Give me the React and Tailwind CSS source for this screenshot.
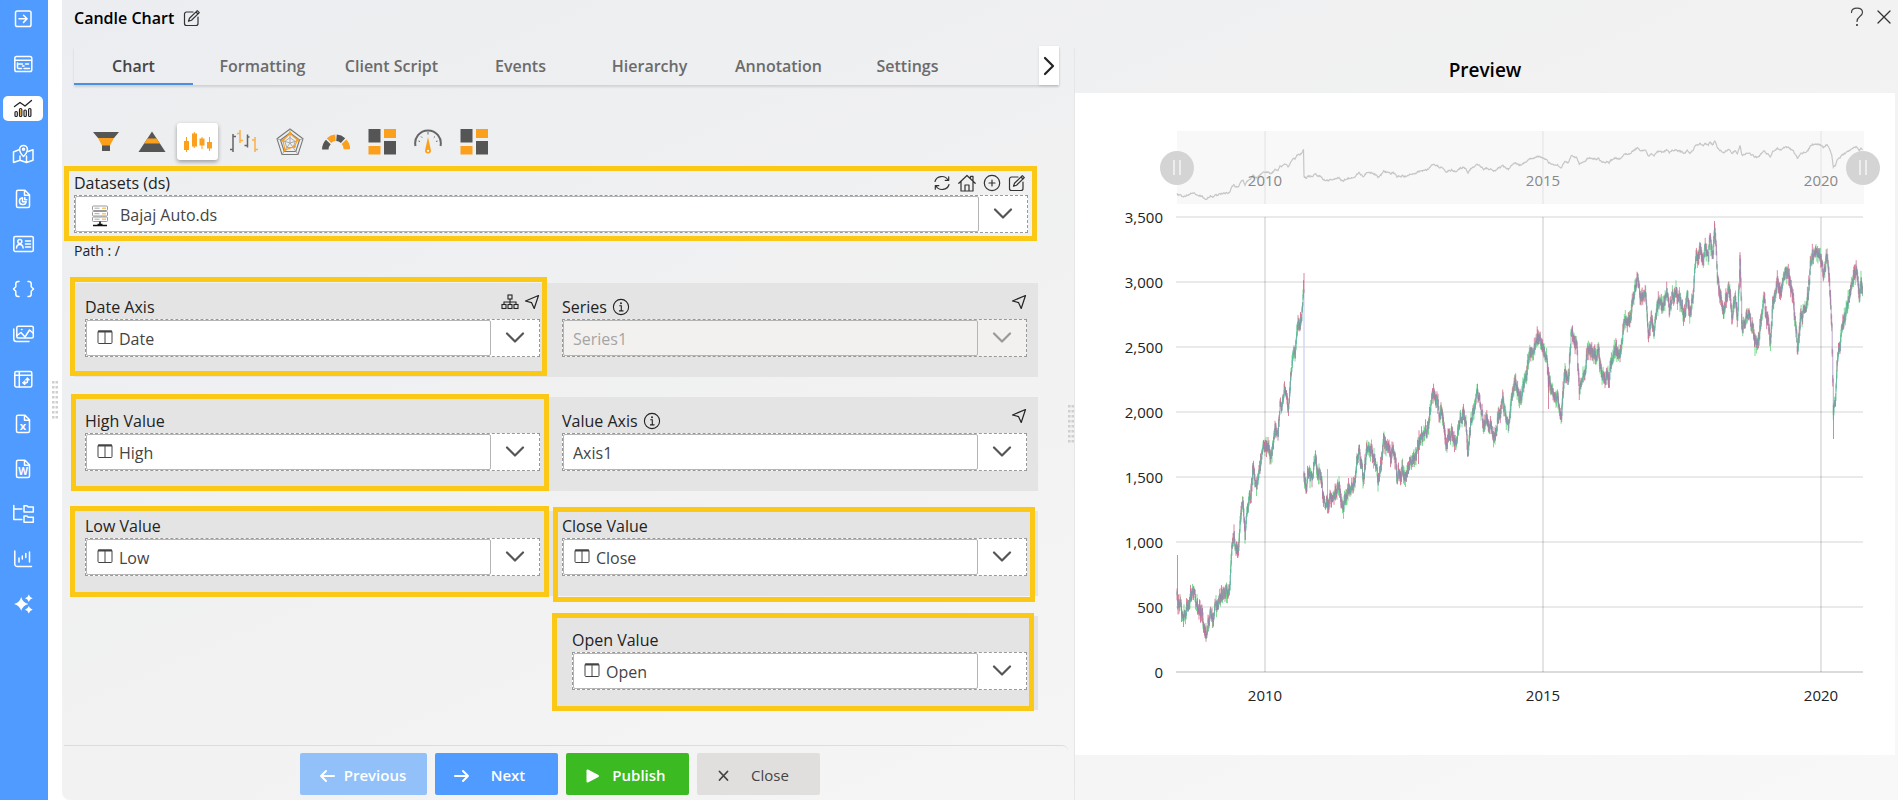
import React, { useRef } from "react";

const FONT = "font-['Open_Sans','Noto_Sans',sans-serif]";

/* ---------- sidebar ---------- */

function NavIcon({ children }) {
  return (
    <svg
      width="24"
      height="20"
      viewBox="0 0 24 20"
      fill="none"
      stroke="currentColor"
      strokeWidth="1.5"
      strokeLinecap="round"
      strokeLinejoin="round"
      aria-hidden="true"
    >
      {children}
    </svg>
  );
}

const filePath =
  "M7 1.2h7l4.500 4.500v11.300a1.500 1.500 0 0 1-1.500 1.500H7A1.500 1.500 0 0 1 5.500 17V2.700A1.500 1.500 0 0 1 7 1.200zM13.500 1.500V6.200h4.700";

const navItems = [
  {
    label: "Open",
    icon: (
      <NavIcon>
        <rect x="4.500" y="2" width="15.500" height="15.500" rx="1.800" />
        <path d="M8 9.800h8M12.500 6.200l3.600 3.600-3.600 3.600" />
      </NavIcon>
    ),
  },
  {
    label: "Dashboard",
    icon: (
      <NavIcon>
        <rect x="3.800" y="2.500" width="17" height="15" rx="1.800" />
        <path d="M4 6.300h16.500M6.500 9v4.500a1 1 0 0 0 1 1h3M7 10h4.500M14.500 10h3M13 14.500h5.500M11.500 12h1.500" />
      </NavIcon>
    ),
  },
  {
    label: "Charts",
    active: true,
    icon: (
      <NavIcon>
        <path strokeWidth="1.300" d="M3.500 7.500l5.500-4 5 3.500 6.500-5.500" />
        <rect strokeWidth="1.200" x="4" y="12.500" width="2.300" height="5" rx="1" />
        <rect strokeWidth="1.200" x="8.500" y="9.500" width="2.300" height="8" rx="1" />
        <rect strokeWidth="1.200" x="13" y="11" width="2.300" height="6.500" rx="1" />
        <rect strokeWidth="1.200" x="17.600" y="9.500" width="2.300" height="8" rx="1" />
        <path stroke="#e0962c" strokeWidth="1" d="M9.700 11v5" />
      </NavIcon>
    ),
  },
  {
    label: "Maps",
    icon: (
      <NavIcon>
        <path d="M8.500 5.500L2.500 8v10.500l6.500-2.300 6.500 2.300 6.500-2.300V5.800L17 7.500M9 12v4M15.500 12v6" />
        <path d="M12.500 12.500C9.800 9.800 8.600 7.600 8.600 5.300a3.900 3.900 0 0 1 7.800 0c0 2.300-1.200 4.500-3.900 7.200z" />
        <circle cx="12.500" cy="5.300" r="1" />
      </NavIcon>
    ),
  },
  {
    label: "Reports",
    icon: (
      <NavIcon>
        <path d={filePath} />
        <path d="M11.500 8.800a3.400 3.400 0 1 0 3.700 3.900h-3.700zM13.800 8.500v2.200h2" />
      </NavIcon>
    ),
  },
  {
    label: "Cards",
    icon: (
      <NavIcon>
        <rect x="2.800" y="2.500" width="19.500" height="15" rx="1.500" />
        <circle cx="8.800" cy="7.500" r="2" />
        <path d="M5.500 14c.2-2.300 1.400-3.500 3.300-3.500s3.100 1.200 3.300 3.500M14.500 7h5M14.500 10h5M14.500 13h5" />
      </NavIcon>
    ),
  },
  {
    label: "Code",
    icon: (
      <NavIcon>
        <path d="M8 2.500H7A2.200 2.200 0 0 0 4.800 4.700v3L2.500 10l2.300 2.300v3A2.200 2.200 0 0 0 7 17.500h1M17 2.500h1a2.200 2.200 0 0 1 2.200 2.200v3l2.300 2.300-2.300 2.300v3a2.200 2.200 0 0 1-2.200 2.200h-1" />
      </NavIcon>
    ),
  },
  {
    label: "Images",
    icon: (
      <NavIcon>
        <rect x="5.800" y="2.200" width="16.500" height="11.800" rx="1.500" />
        <path d="M2.800 5v10A2.500 2.500 0 0 0 5.300 17.500H18M6 11.500l4-3 4 4.500 4.500-7 3.500 3M10.500 5.500h.5" />
      </NavIcon>
    ),
  },
  {
    label: "Pivot",
    icon: (
      <NavIcon>
        <rect x="3.800" y="2.500" width="17" height="15.500" rx="1.500" />
        <path d="M4 6.300h16.500M8.300 2.800v15M13 14h1.500a2 2 0 0 0 2-2V10.500" />
        <path fill="currentColor" strokeWidth=".8" d="M14 12v4l-2.500-2zM14.700 11h3.800l-1.900-2.300z" />
      </NavIcon>
    ),
  },
  {
    label: "Excel",
    icon: (
      <NavIcon>
        <path d={filePath} />
        <text x="12" y="16" textAnchor="middle" fontSize="11" fontWeight="700" fill="currentColor" stroke="none">x</text>
      </NavIcon>
    ),
  },
  {
    label: "Word",
    icon: (
      <NavIcon>
        <path d={filePath} />
        <text x="12" y="16" textAnchor="middle" fontSize="10" fontWeight="700" fill="currentColor" stroke="none">W</text>
      </NavIcon>
    ),
  },
  {
    label: "Tree",
    icon: (
      <NavIcon>
        <path d="M2.800 1.500v14h8M2.800 5h8" />
        <path d="M13 1.800h3l1.200 1.200H22.300V8H13zM13 12h3l1.200 1.200h5.100v5H13z" />
      </NavIcon>
    ),
  },
  {
    label: "Statistics",
    icon: (
      <NavIcon>
        <path d="M3.800 2v13A2.500 2.500 0 0 0 6.300 17.500H20.500M8 9v4M11.300 7v3M14.800 4.500v4M18.500 3v10" />
      </NavIcon>
    ),
  },
  {
    label: "Smart",
    icon: (
      <NavIcon>
        <g fill="currentColor" stroke="none">
          <path d="M10.200 3q1.500 5.500 7.200 7-5.700 1.500-7.200 7-1.500-5.500-7.200-7 5.700-1.500 7.200-7z" />
          <path d="M17.800 .5q.9 3 3.900 3.700-3 .7-3.900 3.700-.9-3-3.900-3.700 3-.7 3.900-3.700zM17.800 12q.9 3 3.900 3.700-3 .7-3.900 3.700-.9-3-3.900-3.700 3-.7 3.900-3.700z" />
        </g>
      </NavIcon>
    ),
  },
];

function Sidebar() {
  return (
    <nav aria-label="Widgets" className="flex w-[48px] shrink-0 flex-col gap-[20px] bg-[#4f9bff] pl-[3px] pt-[6px]">
      {navItems.map((item) => (
        <button
          key={item.label}
          type="button"
          aria-label={item.label}
          className={
            item.active
              ? "flex h-[25px] w-[40px] items-center justify-center rounded-[5px] bg-white text-[#222]"
              : "flex h-[25px] w-[40px] items-center justify-center text-white"
          }
        >
          {item.icon}
        </button>
      ))}
    </nav>
  );
}

/* ---------- small icons ---------- */

function EditIcon() {
  return (
    <svg width="18" height="18" viewBox="0 0 18 18" fill="none" stroke="#333" strokeWidth="1.200" strokeLinecap="round" strokeLinejoin="round" aria-hidden="true">
      <path d="M10 3H3.500A2 2 0 0 0 1.500 5v9.500a2 2 0 0 0 2 2H13a2 2 0 0 0 2-2V8" />
      <path d="M14.300 1.600l2 2L8.500 11.300l-3 1 1-3zM13 3l2 2" />
    </svg>
  );
}

function RefreshIcon() {
  return (
    <svg width="18" height="18" viewBox="0 0 18 18" fill="none" stroke="#333" strokeWidth="1.200" strokeLinecap="round" strokeLinejoin="round" aria-hidden="true">
      <path d="M2 7.500a7 6.500 0 0 1 13-1.500M16 10.500a7 6.500 0 0 1-13 1.500M15.700 2.800V6.300h-3.500M2.300 15.200V11.700h3.500" />
    </svg>
  );
}

function HomeIcon() {
  return (
    <svg width="18" height="18" viewBox="0 0 18 18" fill="none" stroke="#333" strokeWidth="1.200" strokeLinecap="round" strokeLinejoin="round" aria-hidden="true">
      <path d="M.8 9.300L9 1.500l8.200 7.800M3 7.500V17h12V7.500M7 17v-6h4v6M12.500 4.500V2.300H15v4.500" />
    </svg>
  );
}

function PlusCircleIcon() {
  return (
    <svg width="18" height="18" viewBox="0 0 18 18" fill="none" stroke="#333" strokeWidth="1.200" strokeLinecap="round" aria-hidden="true">
      <circle cx="9" cy="9" r="7.700" />
      <path d="M9 6v6M6 9h6" />
    </svg>
  );
}

function InfoIcon() {
  return (
    <svg width="18" height="18" viewBox="0 0 18 18" fill="none" stroke="#222" strokeWidth="1.100" aria-hidden="true">
      <circle cx="9" cy="9" r="7.600" />
      <path d="M7.300 7.800H9.300v5M7 12.900h4.500" />
      <circle cx="9" cy="5.200" r=".4" fill="#222" />
    </svg>
  );
}

function SendIcon() {
  return (
    <svg width="16" height="16" viewBox="0 0 16 16" fill="none" stroke="#222" strokeWidth="1.200" strokeLinejoin="round" aria-hidden="true">
      <path d="M14.500 1.500L1.500 7l6 1.600 2.700 5.900z" />
    </svg>
  );
}

function HierarchyIcon() {
  return (
    <svg width="18" height="16" viewBox="0 0 18 16" fill="none" stroke="#222" strokeWidth="1.100" aria-hidden="true">
      <rect x="7" y="1" width="4" height="4" />
      <rect x="1" y="10.500" width="4" height="4" />
      <rect x="7" y="10.500" width="4" height="4" />
      <rect x="13" y="10.500" width="4" height="4" />
      <path d="M9 5v5.500M3 10.500V8h12v2.500" />
    </svg>
  );
}

function ColumnIcon() {
  return (
    <svg width="16" height="15" viewBox="0 0 16 15" fill="none" stroke="#444" strokeWidth="1" aria-hidden="true">
      <rect x="1" y="1" width="14" height="12.500" rx="1" />
      <path d="M1 1.500h14" strokeWidth="2" />
      <path d="M8 1.500v12" />
    </svg>
  );
}

function ServerIcon() {
  return (
    <svg width="16" height="22" viewBox="0 0 16 22" fill="#fff" stroke="#999" strokeWidth="1" aria-hidden="true">
      <rect x=".5" y="1" width="15" height="4.500" rx="1" />
      <rect x=".5" y="6.500" width="15" height="4.500" rx="1" />
      <rect x=".5" y="12" width="15" height="4.500" rx="1" />
      <path d="M2.500 3.200h5M2.500 8.700h5M2.500 14.200h5" stroke="#aaa" />
      <path d="M10 3.200h4M10 8.700h4M10 14.200h4" stroke="#f5c96c" strokeWidth="1.500" />
      <path d="M8 16.500v3M1 20.500h14M5.500 19.500h5" stroke="#111" strokeWidth="1.600" />
    </svg>
  );
}

function ChevronIcon() {
  return (
    <svg width="20" height="12" viewBox="0 0 20 12" fill="none" stroke="currentColor" strokeWidth="2.200" strokeLinecap="round" strokeLinejoin="round" aria-hidden="true">
      <path d="M2 1.500l8 8 8-8" />
    </svg>
  );
}

/* ---------- chart type icons ---------- */

const DARK = "#555";
const ORANGE = "#fba01c";

function TypeSvg({ children }) {
  return (
    <svg width="28" height="28" viewBox="0 0 28 28" fill="none" aria-hidden="true">
      {children}
    </svg>
  );
}

function TreemapIcon() {
  return (
    <TypeSvg>
      <path fill={DARK} d="M.5 1h12v13.500h-12zM16 13h12v13.500h-12z" />
      <path fill={ORANGE} d="M16 1h12v9H16zM.5 18h12v8.500h-12z" />
    </TypeSvg>
  );
}

const chartTypes = [
  {
    label: "Funnel",
    icon: (
      <TypeSvg>
        <path fill={DARK} d="M1 4h26l-5 6H6zM10 17h8v6h-8z" />
        <path fill={ORANGE} d="M6 10h16l-4 7.500h-8z" />
      </TypeSvg>
    ),
  },
  {
    label: "Pyramid",
    icon: (
      <TypeSvg>
        <path fill={DARK} d="M14 3.500L27.500 24H.5z" />
        <path fill={ORANGE} d="M9.500 10.500h9L22 15.500H6z" />
      </TypeSvg>
    ),
  },
  {
    label: "Candle",
    active: true,
    icon: (
      <TypeSvg>
        <path stroke={ORANGE} strokeWidth="1" d="M2.500 9v15M10.300 4v16M18 9v12M25.500 9v14" />
        <path fill={ORANGE} d="M0 13h5v9H0zM8 5.500h5v13H8zM15.500 10.500h5v7h-5zM23 14h5v6.500h-5z" />
      </TypeSvg>
    ),
  },
  {
    label: "OHLC",
    icon: (
      <TypeSvg>
        <path stroke="#666" strokeWidth="1.500" d="M3 6v18M3 8.500h3M0 21.500h3M17.500 6.500v13M14.500 17.500h3M17.500 9h2" />
        <path stroke="#fbb04a" strokeWidth="1.500" d="M10 2v13M7 5.500h3M10 12.500h3M25 9v15M22 12h3M25 21.500h3" />
      </TypeSvg>
    ),
  },
  {
    label: "Radar",
    icon: (
      <TypeSvg>
        <path stroke="#777" strokeWidth="1.100" d="M14 1l13 9.800-5 15.700H6L1 10.800zM14 5l9.500 7-3.700 11.500H8.200L4.500 12z" />
        <path stroke="#999" strokeWidth=".8" d="M14 9.500l5.200 4L17.200 19.500h-6.400l-2-6zM14 15V1M14 15l13-4.200M14 15l8 11.500M14 15L6 26.500M14 15L1 10.800" />
        <path stroke={ORANGE} strokeWidth="1.100" d="M14 5.500l7.500 6.500-3 6.500-9.500 3.500-2-9.500z" />
        <g fill={ORANGE}>
          <circle cx="14" cy="5.500" r="1.400" />
          <circle cx="21.500" cy="12" r="1.400" />
          <circle cx="18.500" cy="18.500" r="1.400" />
          <circle cx="9" cy="22" r="1.400" />
          <circle cx="7" cy="12.500" r="1.400" />
        </g>
      </TypeSvg>
    ),
  },
  {
    label: "Gauge",
    icon: (
      <TypeSvg>
        <path stroke={DARK} strokeWidth="6.500" d="M3.300 21.500a11 11 0 0 1 3-7.500M14.500 9.800a11 11 0 0 1 6.500 2.800" />
        <path stroke={ORANGE} strokeWidth="6.500" d="M7 12.600a11 11 0 0 1 6.500-2.800M22 13.800a11 11 0 0 1 3 7.500" />
      </TypeSvg>
    ),
  },
  { label: "Treemap", icon: <TreemapIcon /> },
  {
    label: "Speedometer",
    icon: (
      <TypeSvg>
        <path stroke="#666" strokeWidth="2" d="M1.500 18a12.800 12.800 0 1 1 25 0" />
        <path stroke="#666" strokeWidth="1" d="M4.500 13l1.500.5M7 8.500l1.200 1.200M14 4v2.500M21 8.500l-1.200 1.200M23.500 13l-1.500.5" />
        <path fill={ORANGE} d="M14 9l3 13.500a3 3 0 1 1-6 0z" />
        <circle cx="14" cy="22.800" r="1.100" fill="#fff" />
      </TypeSvg>
    ),
  },
  { label: "Heat map", icon: <TreemapIcon /> },
];

/* ---------- fields ---------- */

function Field({ id, value, disabled, icon }) {
  const ref = useRef(null);
  const pad = icon === "server" ? "pl-[44px]" : icon === "column" ? "pl-[32px]" : "pl-[9px]";
  return (
    <div className={`relative flex h-[38px] border border-dashed border-[#999] ${disabled ? "bg-[#f3f1ef] text-[#a5a5a5]" : "bg-white text-[#444]"}`}>
      <select
        id={id}
        ref={ref}
        disabled={disabled}
        className={`min-w-0 flex-1 appearance-none rounded-[2px] border border-[#b5b5b5] bg-transparent pt-[2px] text-[16px] opacity-100 ${pad}`}
      >
        <option>{value}</option>
      </select>
      {icon === "server" && (
        <span className="pointer-events-none absolute left-[17px] top-[9px]"><ServerIcon /></span>
      )}
      {icon === "column" && (
        <span className="pointer-events-none absolute left-[11px] top-[10px]"><ColumnIcon /></span>
      )}
      <button
        type="button"
        disabled={disabled}
        aria-label={`Show options for ${value}`}
        onClick={() => ref.current?.showPicker?.()}
        className={`flex w-[48px] items-center justify-center ${disabled ? "text-[#999]" : "text-[#555]"}`}
      >
        <ChevronIcon />
      </button>
    </div>
  );
}

function Mark({ className }) {
  return <span className={`pointer-events-none absolute border-[5px] border-[#fbc915] ${className}`} />;
}

function Cell({ id, label, value, icon, info, actions, disabled, className, mark }) {
  return (
    <div className={`relative pb-[20px] ${className}`}>
      <div className="relative flex h-[24px] items-center gap-[5px]">
        <label htmlFor={id} className="text-[16px] text-[#222]">{label}</label>
        {info && <InfoIcon />}
        {actions && <div className="absolute -top-[1px] right-0 flex items-center gap-[5px]">{actions}</div>}
      </div>
      <Field id={id} value={value} icon={icon} disabled={disabled} />
      {mark && <Mark className={mark} />}
    </div>
  );
}

function Grip() {
  return (
    <svg width="6" height="38" viewBox="0 0 6 38" aria-hidden="true">
      {[0, 5, 10, 15, 20, 25, 30, 35].map((y) => (
        <path key={y} d={`M0 ${y}h2.500v2.500H0zM3.500 ${y}H6v2.500H3.500z`} fill="#cfcfcf" />
      ))}
    </svg>
  );
}

/* ---------- preview chart ---------- */

const rise = [
  [102, 503], [104, 510], [107, 522], [110, 514], [114, 507], [118, 499], [121, 504], [123, 514], [125, 516], [128, 530], [131, 538], [133, 526],
  [138, 520], [142, 516], [145, 511], [149, 499], [152, 496], [155, 491], [157, 463], [159, 441], [161, 450], [163, 456], [166, 428], [168, 412],
  [170, 437], [173, 417], [176, 394], [178, 374], [181, 394], [184, 384], [188, 356], [192, 356], [196, 361], [200, 341], [203, 338], [205, 311],
  [208, 311], [211, 304], [213, 311], [215, 288], [218, 264], [220, 261], [223, 231], [225, 241], [227, 218], [229, 192],
];

const middle = [
  [229, 386], [231, 389], [233, 378], [237, 381], [240, 369], [243, 381], [246, 384], [248, 408], [251, 418], [255, 406], [258, 398], [264, 391],
  [266, 409], [272, 404], [275, 394], [280, 392], [284, 364], [288, 381], [293, 349], [297, 362], [300, 368], [303, 391], [306, 374], [309, 346],
  [313, 356], [316, 364], [319, 361], [322, 384], [327, 381], [332, 384], [335, 361], [340, 364], [343, 351], [347, 346], [350, 338], [353, 331],
  [357, 296], [360, 306], [363, 314], [368, 324], [372, 357], [376, 336], [382, 351], [385, 331], [389, 319], [393, 353], [397, 321], [401, 301],
];

/* Second half is kept on a three-times finer grid. */
const recentFine = [
  [0, 615], [8, 660], [25, 665], [45, 695], [55, 640], [68, 625], [85, 680], [97, 580], [107, 515], [117, 600], [130, 555], [145, 485],
  [160, 440], [173, 385], [185, 435], [198, 470], [205, 510], [215, 580], [228, 625], [237, 605], [245, 645], [255, 540], [265, 530],
  [273, 420], [290, 420], [298, 560], [312, 530], [325, 430], [340, 475], [355, 445], [365, 525], [375, 510], [387, 540], [403, 430],
  [420, 465], [430, 390], [445, 380], [460, 290], [471, 235], [485, 300], [497, 320], [504, 420], [512, 350], [522, 400], [535, 310],
  [550, 325], [560, 285], [568, 325], [585, 255], [600, 310], [612, 330], [622, 290], [632, 340], [645, 210], [658, 140], [670, 155],
  [677, 130], [685, 170], [690, 120], [697, 165], [704, 110], [712, 220], [722, 280], [732, 335], [745, 265], [757, 340], [765, 290],
  [772, 335], [780, 200], [785, 380], [797, 375], [807, 300], [815, 375], [825, 440], [838, 385], [850, 310], [860, 360], [871, 420],
  [878, 320], [892, 250], [900, 285], [910, 225], [922, 230], [938, 290], [952, 430], [962, 350], [975, 325], [985, 275], [997, 150],
  [1005, 175], [1015, 150], [1024, 190], [1030, 225], [1040, 170], [1048, 220], [1055, 400], [1060, 640], [1065, 610], [1071, 490],
  [1080, 440], [1090, 380], [1100, 330], [1110, 280], [1120, 225], [1130, 215], [1138, 285], [1143, 240], [1149, 280],
];
const recent = recentFine.map(([x, y]) => [405 + x / 3, 107 + y / 3]);

function seeded(seed) {
  let s = seed;
  return () => {
    s = (s * 1664525 + 1013904223) % 4294967296;
    return s / 4294967296;
  };
}

function sample(points, rand) {
  const out = [];
  let drift = 0;
  for (let i = 0; i < points.length - 1; i++) {
    const [x0, y0] = points[i];
    const [x1, y1] = points[i + 1];
    const n = Math.max(1, Math.round((x1 - x0) / 0.5));
    for (let k = 0; k < n; k++) {
      const t = k / n;
      drift = drift * 0.7 + (rand() - 0.5) * 11;
      out.push([x0 + (x1 - x0) * t, y0 + (y1 - y0) * t + drift]);
    }
  }
  return out;
}

const rand = seeded(41);
const partA = sample(rise, rand);
const partB = sample([...middle, ...recent], rand);
let redPath = "M102.500 462V500M229 180V200M343.500 352V371M473.500 274V316M758.500 312V346M665 162V180M639.500 128V146";
let greenPath = "M252.500 376V408M131 530V546M151.500 495V510M176.500 394V410M680 245V263M695.500 240V258";
let fallPath = "";
let climbPath = "";
[partA, partB].forEach((part) => {
  part.forEach(([x, y], i) => {
    const prev = part[Math.max(0, i - 1)][1];
    const up = 2 + rand() * 7;
    const down = 2 + rand() * 7;
    const px = x.toFixed(1);
    const wick = `M${px} ${(y - up).toFixed(1)}V${(y + down).toFixed(1)}`;
    if (rand() > 0.5) redPath += wick;
    else greenPath += wick;
    const body = `M${px} ${(Math.min(prev, y) - 2).toFixed(1)}V${(Math.max(prev, y) + 2).toFixed(1)}`;
    if (y > prev) fallPath += body;
    else climbPath += body;
  });
});

const overview =
  "M" +
  [...partA, ...partB]
    .map(([x, y]) => {
      const value = (579 - y) / 0.13;
      return `${x.toFixed(1)} ${(106 - ((value - 300) / 3100) * 58).toFixed(1)}`;
    })
    .join("L");

const years = [
  { x: 190, label: "2010" },
  { x: 468, label: "2015" },
  { x: 746, label: "2020" },
];
const levels = ["3,500", "3,000", "2,500", "2,000", "1,500", "1,000", "500", "0"];

function Handle({ x }) {
  return (
    <g>
      <circle cx={x} cy="75" r="17" fill="#d4d4d4" />
      <path d={`M${x - 3} 67v15M${x + 3} 67v15`} stroke="#f5f5f5" strokeWidth="1.500" />
    </g>
  );
}

function CandlePreview() {
  return (
    <svg viewBox="0 0 820 662" className="block w-full" role="img" aria-label="Bajaj Auto candle chart">
      <rect x="102" y="38" width="687" height="73" fill="#f8f8f8" />
      <path d="M190 38v73M468 38v73M746 38v73" stroke="#e2e2e2" />
      <path d={overview} fill="none" stroke="#c6c6c6" strokeWidth="1.200" />
      {years.map((y) => (
        <text key={y.label} x={y.x} y="93" textAnchor="middle" fontSize="15" fill="#888">{y.label}</text>
      ))}
      <Handle x={102} />
      <Handle x={788} />
      {levels.map((label, i) => (
        <g key={label}>
          <path d={`M101 ${124 + i * 65}H788`} stroke={label === "0" ? "#cfcfcf" : "#e3e3e3"} strokeWidth="1.500" />
          <text x="88" y={130 + i * 65} textAnchor="end" fontSize="15" fill="#222">{label}</text>
        </g>
      ))}
      {years.map((y) => (
        <g key={y.label}>
          <path d={`M${y.x} 124V579`} stroke="#000" strokeOpacity=".14" strokeWidth="1.500" />
          <text x={y.x} y="608" textAnchor="middle" fontSize="15" fill="#222">{y.label}</text>
        </g>
      ))}
      <path d="M229 196V386" stroke="#d3d8f0" strokeWidth="1.500" />
      <path d={greenPath} stroke="#5fd37c" strokeWidth="1" strokeOpacity=".8" />
      <path d={redPath} stroke="#cf5f83" strokeWidth="1" strokeOpacity=".75" />
      <path d={climbPath} stroke="#62b3a4" strokeWidth="1" strokeOpacity=".8" />
      <path d={fallPath} stroke="#9a83ae" strokeWidth="1" strokeOpacity=".7" />
    </svg>
  );
}

/* ---------- page ---------- */

const tabs = ["Chart", "Formatting", "Client Script", "Events", "Hierarchy", "Annotation", "Settings"];

function ActionButton({ label, icon, className }) {
  return (
    <button type="button" className={`flex h-[42px] items-center rounded-[2px] text-[15px] ${className}`}>
      <svg width="16" height="16" viewBox="0 0 16 16" fill="none" stroke="currentColor" strokeWidth="2" strokeLinecap="round" strokeLinejoin="round" aria-hidden="true" className="mt-[4px]">
        {icon}
      </svg>
      <span className="flex-1 pt-[2px] text-center">{label}</span>
    </button>
  );
}

export default function App() {
  return (
    <div className={`flex min-h-screen bg-white text-[#222] ${FONT}`}>
      <Sidebar />
      <div className="flex w-[14px] shrink-0 items-center justify-center">
        <Grip />
      </div>

      <main className="flex min-w-0 flex-1 rounded-bl-[8px] bg-gradient-to-br from-[#ebedf0] via-[#f2f2f2] to-[#f8f8f8]">
        <section className="flex min-w-0 flex-[1006] flex-col">
          <header className="flex h-[36px] items-center gap-[9px] pl-[12px]">
            <h1 className="text-[16px] font-semibold text-black">Candle Chart</h1>
            <button type="button" aria-label="Rename"><EditIcon /></button>
          </header>

          <div className="ml-[12px] mr-[9px] mt-[10px] flex h-[39px] justify-between shadow-[0_2px_2px_rgba(0,0,0,0.12)]">
            <div role="tablist" className="flex gap-[10px]">
              {tabs.map((tab, i) => (
                <button
                  key={tab}
                  type="button"
                  role="tab"
                  aria-selected={i === 0}
                  className={
                    i === 0
                      ? "w-[119px] border-b-2 border-[#4a90e2] pt-[2px] text-[16px] font-semibold text-[#444]"
                      : "w-[119px] border-b-2 border-transparent pt-[2px] text-[16px] font-semibold text-[#6b6b6b]"
                  }
                >
                  {tab}
                </button>
              ))}
            </div>
            <button type="button" aria-label="More tabs" className="flex w-[20px] items-center justify-center bg-white shadow">
              <svg width="12" height="20" viewBox="0 0 12 20" fill="none" stroke="#222" strokeWidth="2.200" strokeLinecap="round" strokeLinejoin="round" aria-hidden="true">
                <path d="M2 2l8 8-8 8" />
              </svg>
            </button>
          </div>

          <div className="ml-[23px] mt-[38px] flex gap-[5px]">
            {chartTypes.map((t) => (
              <button
                key={t.label}
                type="button"
                aria-label={t.label}
                className={
                  t.active
                    ? "flex h-[37px] w-[41px] items-center justify-center rounded-[3px] bg-white shadow-[0_2px_4px_rgba(0,0,0,0.35)]"
                    : "flex h-[37px] w-[41px] items-center justify-center"
                }
              >
                {t.icon}
              </button>
            ))}
          </div>

          <div className="relative ml-[12px] mr-[40px] mt-[11px]">
            <div className="flex h-[24px] items-center justify-between">
              <label htmlFor="dataset" className="text-[16px] text-[#222]">Datasets (ds)</label>
              <div className="flex items-center gap-[7px] pr-[2px]">
                <button type="button" aria-label="Refresh"><RefreshIcon /></button>
                <button type="button" aria-label="Home"><HomeIcon /></button>
                <button type="button" aria-label="Add"><PlusCircleIcon /></button>
                <button type="button" aria-label="Edit"><EditIcon /></button>
              </div>
            </div>
            <Field id="dataset" value="Bajaj Auto.ds" icon="server" />
            <Mark className="-bottom-[8px] -left-[10px] -right-[9px] -top-[5px]" />
          </div>
          <p className="ml-[12px] mt-[6px] h-[24px] text-[14px] leading-[24px]">Path : /</p>

          <div className="ml-[12px] mr-[30px] mt-[20px] flex flex-col gap-[20px]">
            <div className="grid grid-cols-2 bg-[#e4e4e4]">
              <Cell
                id="date-axis" label="Date Axis" value="Date" icon="column"
                className="pl-[11px] pr-[16px] pt-[12px]"
                actions={<><HierarchyIcon /><SendIcon /></>}
                mark="-left-[4px] right-[9px] -top-[6px] bottom-[1px]"
              />
              <Cell id="series" label="Series" value="Series1" info disabled className="pl-[6px] pr-[11px] pt-[12px]" actions={<SendIcon />} />
            </div>
            <div className="grid grid-cols-2 bg-[#e4e4e4]">
              <Cell
                id="high" label="High Value" value="High" icon="column"
                className="pl-[11px] pr-[16px] pt-[12px]"
                mark="-left-[3px] right-[7px] -top-[3px] bottom-0"
              />
              <Cell id="value-axis" label="Value Axis" value="Axis1" info className="pl-[6px] pr-[11px] pt-[12px]" actions={<SendIcon />} />
            </div>
            <div className="grid grid-cols-2 bg-[#e4e4e4]">
              <Cell
                id="low" label="Low Value" value="Low" icon="column"
                className="pl-[11px] pr-[16px] pt-[3px]"
                mark="-left-[4px] right-[7px] -top-[5px] -bottom-[1px]"
              />
              <Cell
                id="close" label="Close Value" value="Close" icon="column"
                className="pl-[6px] pr-[11px] pt-[3px]"
                mark="-left-[3px] right-[3px] -top-[4px] -bottom-[6px]"
              />
            </div>
            <div className="grid grid-cols-2">
              <Cell
                id="open" label="Open Value" value="Open" icon="column"
                className="col-start-2 bg-[#e4e4e4] pl-[16px] pr-[11px] pt-[12px]"
                mark="-left-[4px] right-[4px] -top-[3px] -bottom-[1px]"
              />
            </div>
          </div>

          <footer className="ml-[2px] mt-auto flex h-[55px] items-start justify-center gap-[8px] rounded-tr-[6px] border-t border-[#dcdcdc] pr-[12px] pt-[7px]">
            <ActionButton label="Previous" className="w-[127px] bg-[#92c1fa] pl-[19px] pr-[12px] font-semibold text-white" icon={<path d="M15 8H2M7 3L2 8l5 5" />} />
            <ActionButton label="Next" className="w-[123px] bg-[#4f9bff] pl-[19px] pr-[12px] font-semibold text-white" icon={<path d="M1 8h13M9 3l5 5-5 5" />} />
            <ActionButton label="Publish" className="w-[123px] bg-[#3bba21] pl-[19px] pr-[12px] font-semibold text-white" icon={<path d="M2.500 2.500v11L13 8z" fill="currentColor" />} />
            <ActionButton label="Close" className="w-[123px] bg-[#e1dfde] pl-[19px] pr-[12px] text-[#444]" icon={<path d="M3.500 3.500l8 8.500M11.500 3.500l-8 8.500" strokeWidth="1.800" />} />
          </footer>
        </section>

        <div className="flex w-[6px] shrink-0 items-center pt-[48px]">
          <Grip />
        </div>

        <section className="flex min-w-0 flex-[824] flex-col">
          <div className="flex h-[34px] items-center justify-end gap-[13px] pr-[7px]">
            <button type="button" aria-label="Help">
              <svg width="14" height="20" viewBox="0 0 14 20" fill="none" stroke="#444" strokeWidth="1.200" strokeLinecap="round" aria-hidden="true">
                <path d="M1.500 5.500C1.500 3 3.500 1.200 7 1.200s5.500 1.800 5.500 4.300c0 3.800-5.500 4-5.500 9" />
                <circle cx="7" cy="18" r=".5" fill="#444" />
              </svg>
            </button>
            <button type="button" aria-label="Close window">
              <svg width="14" height="14" viewBox="0 0 14 14" stroke="#333" strokeWidth="1.300" strokeLinecap="round" aria-hidden="true">
                <path d="M1 1l12 12M13 1L1 13" />
              </svg>
            </button>
          </div>
          <div className="mt-[14px] flex flex-1 flex-col border-l border-[#e6e6e6] pr-[3px]">
            <h2 className="h-[45px] text-center text-[19px] font-semibold leading-[45px] text-black">Preview</h2>
            <div className="bg-white">
              <CandlePreview />
            </div>
          </div>
        </section>
      </main>
    </div>
  );
}
